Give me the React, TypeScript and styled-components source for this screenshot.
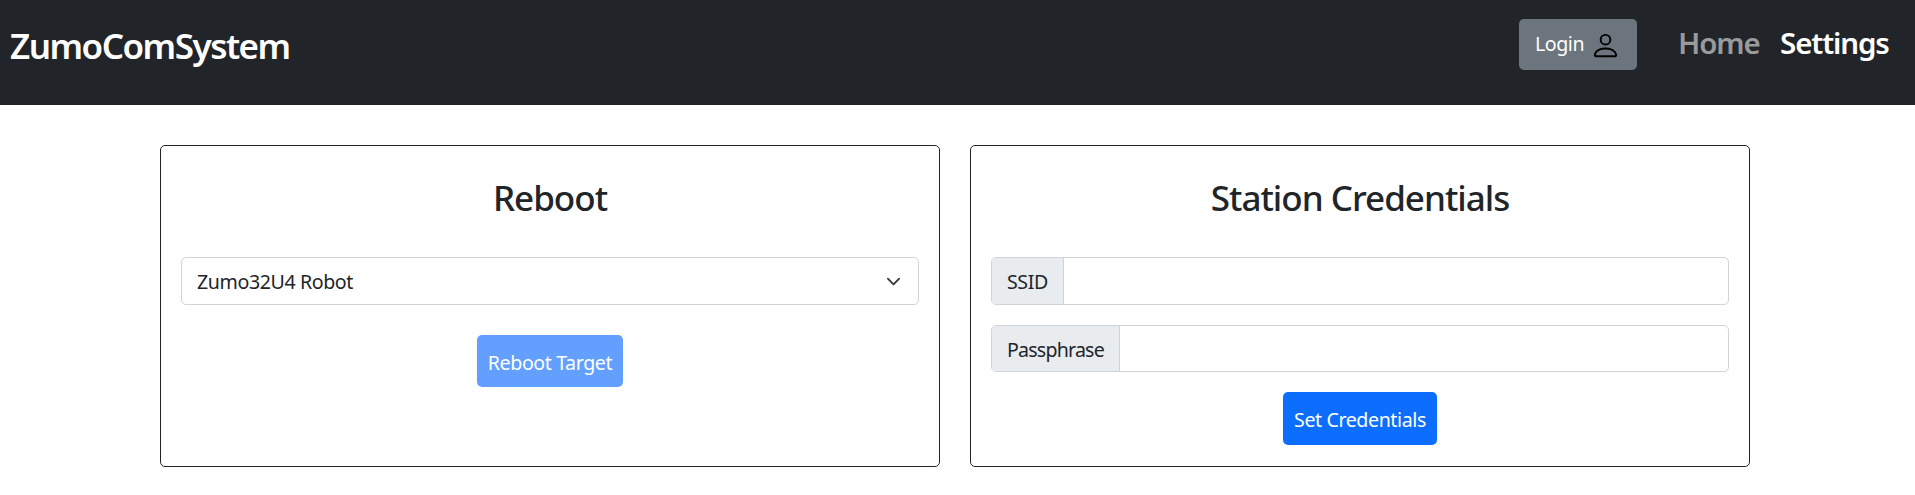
import React from "react";
import styled, { createGlobalStyle } from "styled-components";

const Global = createGlobalStyle`
  *, *::before, *::after { box-sizing: border-box; }
  body { margin: 0; background: #fff; color: #212529; font: 400 19.6px/30px "Noto Sans", "Liberation Sans", sans-serif; overflow: hidden; }
`;
const Navbar = styled.header`
  display: flex; align-items: flex-start; height: 105px; background: #212529; color: #fff; padding: 19px 25px 0 10px;
`;
const Brand = styled.a`
  margin: 0 auto 0 0; font-size: 35px; font-weight: 600; line-height: 54px; letter-spacing: -1.5px; white-space: nowrap;
`;
const Login = styled.button`
  display: flex; align-items: center; width: 118px; height: 51px; margin-right: 41px; padding: 0 0 0 16px;
  border: 0; border-radius: 5px; background: #6c757d; color: #fff; font: inherit; letter-spacing: -0.45px;
`;
const LoginText = styled.span`
  width: 55px; padding-bottom: 1px; text-align: left;
`;
const UserIcon = styled.svg`
  flex: none; width: 31px; height: 31px; margin-top: 2px; color: #000;
`;
const NavLink = styled.a<{ $active?: boolean; $w: number }>`
  width: ${p => p.$w}px; margin-left: ${p => (p.$active ? 20 : 0)}px; font-size: 29.5px; line-height: 47px; font-weight: 600;
  letter-spacing: -1.1px; white-space: nowrap; color: ${p => (p.$active ? "#fff" : "#999a9b")};
`;
const Main = styled.main`
  display: grid; grid-template-columns: 780px 780px; column-gap: 30px; padding: 40px 0 0 160px;
`;
const Card = styled.section`
  display: flex; flex-direction: column; align-items: center; height: 322px; padding: 0 20px; border: 1px solid #212529; border-radius: 5px;
`;
const Title = styled.h2`
  margin: 29px 0 37px; font-size: 35px; line-height: 45px; font-weight: 500; letter-spacing: -1px; white-space: nowrap;
`;
const Field = styled.div<{ $h?: number }>`
  display: flex; align-items: center; width: 100%; height: ${p => p.$h ?? 48}px; margin-bottom: 20px; border: 1px solid #ced4da; border-radius: 5px; overflow: hidden;
`;
const Select = styled(Field)`
  justify-content: space-between; padding: 0 17px 0 15px; margin-bottom: 30px; letter-spacing: -0.4px;
`;
const Value = styled.span`
  padding-top: 2px;
`;
const Label = styled.span<{ $w: number; $ls: number }>`
  width: ${p => p.$w}px; height: 100%; line-height: 48px; padding-left: 15px; background: #e9ecef; border-right: 1px solid #ced4da;
  letter-spacing: ${p => p.$ls}px; white-space: nowrap;
`;
const Action = styled.button<{ $w: number; $faded?: boolean }>`
  width: ${p => p.$w}px; height: ${p => (p.$faded ? 52 : 53)}px; padding: 3px 0 0; border: 0; border-radius: 5px; color: #fff; font: inherit; white-space: nowrap;
  letter-spacing: -0.4px; background: ${p => (p.$faded ? "#639fff" : "#0d6efd")};
`;

export default function App() {
  return (
    <>
      <Global />
      <Navbar>
        <Brand>ZumoComSystem</Brand>
        <Login>
          <LoginText>Login</LoginText>
          <UserIcon viewBox="0 0 16 16" fill="currentColor"><path d="M8 8a3 3 0 1 0 0-6 3 3 0 0 0 0 6m2-3a2 2 0 1 1-4 0 2 2 0 0 1 4 0m4 8c0 1-1 1-1 1H3s-1 0-1-1 1-4 6-4 6 3 6 4m-1-.004c-.001-.246-.154-.986-.832-1.664C11.516 10.68 10.289 10 8 10s-3.516.68-4.168 1.332c-.678.678-.83 1.418-.832 1.664z" /></UserIcon>
        </Login>
        <NavLink $w={82}>Home</NavLink>
        <NavLink $w={110} $active>Settings</NavLink>
      </Navbar>
      <Main>
        <Card>
          <Title>Reboot</Title>
          <Select>
            <Value>Zumo32U4 Robot</Value>
            <svg width="15" height="15" viewBox="0 0 16 16" fill="none" stroke="#343a40" strokeWidth="2" strokeLinecap="round" strokeLinejoin="round"><path d="m2 5 6 6 6-6" /></svg>
          </Select>
          <Action $w={146} $faded>Reboot Target</Action>
        </Card>
        <Card>
          <Title>Station Credentials</Title>
          <Field><Label $w={72} $ls={-0.4}>SSID</Label></Field>
          <Field $h={47}><Label $w={128} $ls={-0.8}>Passphrase</Label></Field>
          <Action $w={154}>Set Credentials</Action>
        </Card>
      </Main>
    </>
  );
}
